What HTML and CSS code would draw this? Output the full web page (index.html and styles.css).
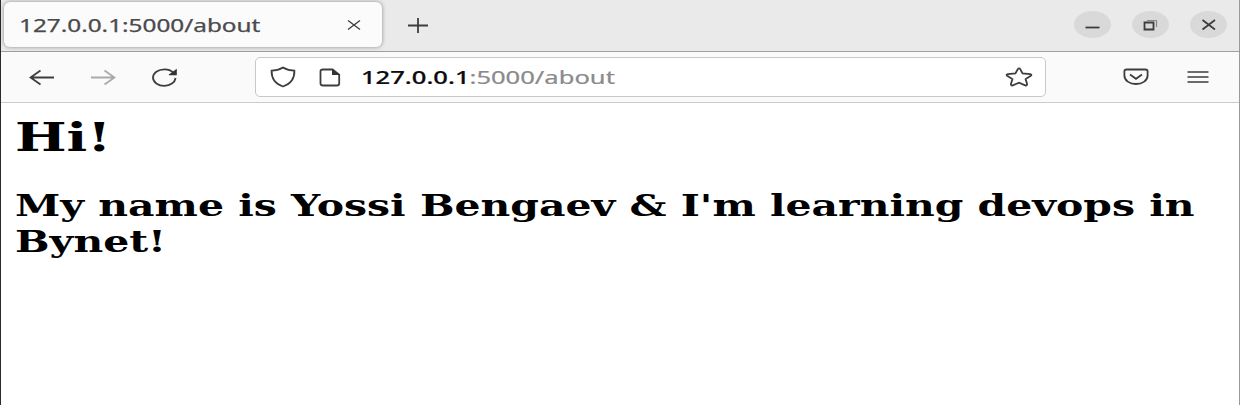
FILE: index.html
```
<!DOCTYPE html>
<html lang="en">
<head>
<meta charset="utf-8">
<title>127.0.0.1:5000/about</title>
<link rel="stylesheet" href="styles.css">
</head>
<body>
<div class="window">
  <header class="tabbar">
    <div class="tab">
      <span class="tab-title">127.0.0.1:5000/about</span>
      <svg class="tab-close" width="16" height="12" viewBox="0 0 16 12"><path d="M2 1.5L14 10.5M14 1.5L2 10.5"/></svg>
    </div>
    <svg class="new-tab" width="22" height="16" viewBox="0 0 22 16"><path d="M1 8.5H21M11 1V16"/></svg>
    <div class="controls">
      <span class="control"><svg width="37" height="27" viewBox="0 0 37 27"><path d="M11.5 16.5H25.5"/></svg></span>
      <span class="control"><svg width="37" height="27" viewBox="0 0 37 27"><path d="M12.5 11.5H21.5V18.5H12.5Z"/><path class="faint" d="M15 9.5H24.5V16"/></svg></span>
      <span class="control"><svg width="37" height="27" viewBox="0 0 37 27"><path d="M12.5 9L25 18.5M25 9L12.5 18.5"/></svg></span>
    </div>
  </header>
  <nav class="toolbar">
    <div class="nav-buttons">
      <svg width="26" height="18" viewBox="0 0 26 18"><path d="M25 9.5H1.5M11.5 2.5L1.5 9.5L11.5 16.5"/></svg>
      <svg class="disabled" width="26" height="18" viewBox="0 0 26 18"><path d="M1 9.5H24.5M14.5 2.5L24.5 9.5L14.5 16.5"/></svg>
      <svg width="26" height="20" viewBox="0 0 26 20"><path d="M24.6 11C23.9 15.5 19.4 18.8 13.5 18.8C7 18.8 2 15.2 2 10.6C2 6 7 2.4 13.5 2.4C17.4 2.4 21 3.9 22.9 6.3"/><path class="solid" d="M25.8 1.8V8.2H17.8V7.4Z"/></svg>
    </div>
    <div class="urlbar">
      <svg class="shield" width="26" height="22" viewBox="0 0 26 22"><path d="M13 1.5C10 3.3 6 4.6 1.6 4.6C1.4 11.5 4 17.5 13 20.5C22 17.5 24.6 11.5 24.4 4.6C20 4.6 16 3.3 13 1.5Z"/></svg>
      <svg class="page-icon" width="22" height="19" viewBox="0 0 22 19"><path d="M4 1.5H13.5L20.2 6.8V15.5Q20.2 17.5 17.8 17.5H4Q1.5 17.5 1.5 15.5V3.3Q1.5 1.5 4 1.5Z"/><path class="solid" d="M13 1V7H21Z"/></svg>
      <span class="url"><b>127.0.0.1</b>:5000/about</span>
      <svg class="star" width="28" height="20" viewBox="0 0 28 20"><path d="M14 1.4Q14.8 1.4 15.2 2.2L17.6 6.5L25.2 7.2Q27.2 7.6 25.8 8.8L20.6 12.1L22.1 17.1Q22.2 19 20.2 18.3L14 15.7L7.8 18.3Q5.8 19 5.9 17.1L7.4 12.1L2.2 8.8Q.8 7.6 2.8 7.2L10.4 6.5L12.8 2.2Q13.2 1.4 14 1.4Z"/></svg>
    </div>
    <svg class="pocket" width="26" height="18" viewBox="0 0 26 18"><path d="M3.6 1.5H22.4Q24.6 1.5 24.6 3.3V7.5C24.6 12.5 19.5 16 13 16S1.4 12.5 1.4 7.5V3.3Q1.4 1.5 3.6 1.5Z"/><path d="M7 6.6L13 10.8L19 6.6"/></svg>
    <svg class="menu" width="22" height="14" viewBox="0 0 22 14"><path d="M0.5 2H21.5M0.5 7H21.5M0.5 12H21.5"/></svg>
  </nav>
  <main class="content">
    <h1 class="greeting">Hi!</h1>
    <h2 class="intro">My name is Yossi Bengaev &amp; I'm learning devops in Bynet!</h2>
  </main>
</div>
</body>
</html>
```
FILE: styles.css
```
body {
  margin: 0;
  background: #fff;
}
.window {
  box-sizing: border-box;
  width: 1240px;
  height: 405px;
  overflow: hidden;
  border-left: 1px solid #30262c;
  border-right: 1px solid #999;
}
svg {
  display: block;
  flex: none;
  fill: none;
  stroke: #3d3d3f;
  stroke-width: 1.8;
}
.solid {
  fill: #333;
  stroke: none;
}
.tabbar {
  box-sizing: border-box;
  display: flex;
  height: 52px;
  padding: 2px 12px 0 3px;
  background: #eaeaea;
  border-bottom: 1px solid #9f9f9f;
}
.tab {
  box-sizing: border-box;
  display: flex;
  align-items: center;
  justify-content: space-between;
  width: 378px;
  height: 45px;
  padding: 0 20px 0 15px;
  background: #fbfbfb;
  border-radius: 6px;
  box-shadow: 0 0 4px rgba(0, 0, 0, .4);
}
.tab-title,
.url {
  font: 17.5px/24px "Noto Sans", sans-serif;
  white-space: nowrap;
  transform-origin: left center;
}
.tab-title {
  color: #4a4a4c;
  transform: scaleX(1.39);
  -webkit-text-stroke: .25px #4a4a4c;
}
.tab-close {
  stroke-width: 1.3;
}
.new-tab {
  margin: 15px 0 0 25px;
}
.controls {
  display: flex;
  gap: 21px;
  margin: 9px 0 0 auto;
}
.control {
  width: 37px;
  height: 27px;
  background: #d9d9d9;
  border-radius: 50%;
}
.faint {
  stroke: #888;
  stroke-width: 1.2;
}
.toolbar {
  box-sizing: border-box;
  display: flex;
  align-items: center;
  height: 51px;
  padding-left: 28px;
  background: #fafafa;
  border-bottom: 1px solid #ccc;
}
.nav-buttons {
  display: flex;
  align-items: center;
  gap: 35px;
  width: 226px;
}
.disabled {
  stroke: #aaa;
}
.urlbar {
  box-sizing: border-box;
  display: flex;
  align-items: center;
  width: 791px;
  height: 40px;
  padding: 0 12px 0 14px;
  background: #fff;
  border: 1.5px solid #c8c8c8;
  border-radius: 5px;
}
.page-icon {
  margin-left: 23px;
}
.url {
  margin-left: 20px;
  color: #8a8a8c;
  transform: scaleX(1.46);
  -webkit-text-stroke: .2px;
}
.url b {
  font-weight: 500;
  color: #0c0c0d;
}
.star {
  margin-left: auto;
}
.pocket {
  margin-left: 77px;
}
.menu {
  margin-left: 38px;
  stroke-width: 1.5;
}
.content {
  padding: 11px 0 0 14px;
  color: #000;
  font-family: "DejaVu Serif", serif;
}
.greeting,
.intro {
  width: 890px;
  margin: 0;
  transform: scaleX(1.342);
  transform-origin: left top;
}
.greeting {
  font-size: 39px;
  line-height: 46px;
  transform: scaleX(1.4);
}
.intro {
  margin-top: 27px;
  font-size: 30.5px;
  line-height: 36px;
}
```
